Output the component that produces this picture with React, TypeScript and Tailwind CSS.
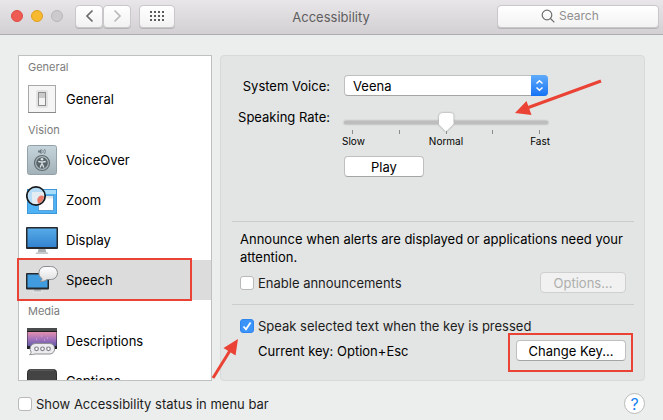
import { useState, type ReactNode } from "react";

function SwitchIcon() {
  return (
    <svg width="32" height="32" viewBox="0 0 32 32" aria-hidden="true">
      <rect x="2.500" y="2.500" width="27" height="27" fill="#f5f5f5" stroke="#a9a9a9" />
      <path d="M2 29.500h28" stroke="#8a8a8a" />
      <rect x="10" y="7" width="12" height="18" rx="2" fill="#e3e3e3" />
      <rect x="12.500" y="9.500" width="7" height="13" fill="#f4f4f4" stroke="#8b8b8b" />
      <rect x="13" y="10" width="6" height="5" fill="#c9c9c9" />
    </svg>
  );
}

function VoiceOverIcon() {
  return (
    <svg width="32" height="32" viewBox="0 0 32 32" aria-hidden="true">
      <defs>
        <linearGradient id="vo" x1="0" y1="0" x2="0" y2="1">
          <stop offset="0" stopColor="#c6d5dc" />
          <stop offset="1" stopColor="#a3b2b9" />
        </linearGradient>
      </defs>
      <rect x="1.500" y="1.500" width="29" height="29" rx="2" fill="url(#vo)" stroke="#93a1a8" />
      <path d="M12 6.500h1.500l2-1.800v5.600l-2-1.800h-1.500z" fill="#6d7980" />
      <path d="M16.800 6q1 1.500 0 3M18.500 5q1.800 2.500 0 5" fill="none" stroke="#6d7980" strokeWidth=".9" />
      <circle cx="16" cy="19" r="7.500" fill="#a9b7bd" stroke="#626c70" strokeWidth="1.200" />
      <circle cx="16" cy="19" r="5.800" fill="#59646a" />
      <circle cx="16" cy="15.300" r="1.300" fill="#dde6ea" />
      <path
        d="M12.300 17.500l3.700.7 3.700-.7M16 18v2.500M15.500 20.300l-1.300 3.200M16.500 20.300l1.300 3.200"
        fill="none"
        stroke="#dde6ea"
        strokeWidth="1.300"
      />
    </svg>
  );
}

function ZoomIcon() {
  return (
    <svg width="32" height="32" viewBox="0 0 32 32" aria-hidden="true">
      <rect x="1.500" y="5.500" width="29" height="24" fill="#4fb2f5" stroke="#3d97d8" />
      <rect x="2" y="6" width="28" height="4" fill="#a9dcf8" />
      <rect x="12.500" y="11.500" width="15" height="15" fill="#fff" stroke="#3b8cc6" strokeWidth=".7" />
      <path d="M13 12h14v2.500h-14z" fill="#dfe6ea" />
      <circle cx="10" cy="12" r="9.200" fill="#b7dcf6" />
      <path d="M6 8h12v8a9 9 0 0 1-4 4H6z" fill="#e3ebf3" />
      <path d="M17.500 12a4.500 4.500 0 0 0-6 5.500l1 2.500q4.500-2 5.500-7z" fill="#ea7a69" />
      <circle cx="10" cy="12" r="9.200" fill="none" stroke="#17191b" strokeWidth="1.700" />
    </svg>
  );
}

function DisplayIcon() {
  return (
    <svg width="32" height="32" viewBox="0 0 32 32" aria-hidden="true">
      <defs>
        <linearGradient id="scr" x1="0" y1="0" x2="0" y2="1">
          <stop offset="0" stopColor="#57abe8" />
          <stop offset="1" stopColor="#3383cf" />
        </linearGradient>
      </defs>
      <path d="M12.500 25h7l.8 3.500h-8.600z" fill="#a8adb0" />
      <path d="M10.500 28.300h11l1 1.700h-13z" fill="#c4c8ca" />
      <rect x="0" y="3" width="32" height="22" rx="1" fill="#25292d" />
      <rect x="1.500" y="4.500" width="29" height="18.500" fill="url(#scr)" />
    </svg>
  );
}

function SpeechIcon() {
  return (
    <svg width="32" height="32" viewBox="0 0 32 32" aria-hidden="true">
      <defs>
        <linearGradient id="bub" x1="0" y1="0" x2="0" y2="1">
          <stop offset="0" stopColor="#ffffff" />
          <stop offset="1" stopColor="#dedede" />
        </linearGradient>
      </defs>
      <path d="M8.500 25h6l.7 3h-7.400z" fill="#b4b8ba" />
      <path d="M7 27.500h9l.8 1.300h-10.600z" fill="#e6e7e8" />
      <rect x="0" y="9" width="23" height="16.500" rx="1" fill="#25292d" />
      <rect x="1.500" y="10.500" width="20" height="13" fill="#409bdf" />
      <path
        d="M19 2.500h5.500a6.500 6.500 0 0 1 1 13h-4.500c-2 1.700-4.500 2-7 1.700 1.500-.6 2-1.500 2-2.700A6.500 6.500 0 0 1 19 2.500z"
        fill="url(#bub)"
        stroke="#898d90"
      />
    </svg>
  );
}

function DescriptionsIcon() {
  return (
    <svg width="32" height="32" viewBox="0 0 32 32" aria-hidden="true">
      <defs>
        <linearGradient id="desc" x1="0" y1="0" x2="0" y2="1">
          <stop offset="0" stopColor="#e48fae" />
          <stop offset=".5" stopColor="#a573bb" />
          <stop offset="1" stopColor="#655baa" />
        </linearGradient>
      </defs>
      <rect x="1" y="3" width="30" height="21" fill="#1f1f22" />
      <rect x="1" y="3" width="30" height="3" fill="#4a4b4d" />
      <rect x="1.500" y="7" width="29" height="14" fill="url(#desc)" />
      <path d="M15 11h1M21 13h1M18 15h1M10 14h1" stroke="#d9b4e0" />
      <path
        d="M9 18.500h15a5.300 5.300 0 0 1 0 10.500H9q-2 .8-5.500.6 1.500-1 1.700-2.500A5.300 5.300 0 0 1 9 18.500z"
        fill="#ececee"
        stroke="#8f8f94"
      />
      <g fill="#fff" stroke="#818187" strokeWidth="1.200">
        <circle cx="10.500" cy="23.800" r="1.800" />
        <circle cx="16.500" cy="23.800" r="1.800" />
        <circle cx="22.500" cy="23.800" r="1.800" />
      </g>
    </svg>
  );
}

function CaptionsIcon() {
  return (
    <svg width="32" height="32" viewBox="0 0 32 32" aria-hidden="true">
      <rect x="1.500" y="4.500" width="29" height="26" rx="3" fill="#444445" stroke="#2e2e2f" />
      <path d="M4 5h24" stroke="#6b6b6c" />
    </svg>
  );
}

const groups: { title: string; items: { name: string; icon: ReactNode }[] }[] = [
  { title: "General", items: [{ name: "General", icon: <SwitchIcon /> }] },
  {
    title: "Vision",
    items: [
      { name: "VoiceOver", icon: <VoiceOverIcon /> },
      { name: "Zoom", icon: <ZoomIcon /> },
      { name: "Display", icon: <DisplayIcon /> },
      { name: "Speech", icon: <SpeechIcon /> },
    ],
  },
  {
    title: "Media",
    items: [
      { name: "Descriptions", icon: <DescriptionsIcon /> },
      { name: "Captions", icon: <CaptionsIcon /> },
    ],
  },
];

function TitleBar() {
  const tool =
    "flex h-[23px] items-center justify-center rounded border border-[#c9c7c9] bg-gradient-to-b from-white to-[#f3f2f3] shadow-[0_1px_0_#b5b3b5]";
  return (
    <header className="grid h-[35px] grid-cols-[1fr_auto_1fr] items-center border-b border-[#aeacae] bg-gradient-to-b from-[#e8e6e8] to-[#d2d0d2] pr-1 pb-0.5 pl-[11px]">
      <div className="flex items-center">
        <div className="flex gap-2">
          <button aria-label="Close" className="size-3 rounded-full border border-[#dd4a42] bg-[#ee5b52]" />
          <button aria-label="Minimize" className="size-3 rounded-full border border-[#dfa023] bg-[#f6b92f]" />
          <button aria-label="Full screen" disabled className="size-3 rounded-full border border-[#b9b7b9] bg-[#cccacc]" />
        </div>
        <nav className="ml-3 flex">
          <button aria-label="Back" className={`${tool} w-7`}>
            <svg width="9" height="14" viewBox="0 0 9 14" fill="none" stroke="#6a6a6a" strokeWidth="1.700">
              <path d="M7.500 1.500L2 7l5.500 5.500" />
            </svg>
          </button>
          <button aria-label="Forward" className={`${tool} w-7`}>
            <svg width="9" height="14" viewBox="0 0 9 14" fill="none" stroke="#b9b9b9" strokeWidth="1.700">
              <path d="M1.500 1.500L7 7l-5.500 5.500" />
            </svg>
          </button>
        </nav>
        <button aria-label="Show all" className={`${tool} ml-2 w-9`}>
          <svg width="14" height="10" viewBox="0 0 14 10" fill="#5c5c5c">
            {[0, 4, 8].map((y) => [0, 4, 8, 12].map((x) => <rect key={`${x}-${y}`} x={x} y={y} width="2" height="2" />))}
          </svg>
        </button>
      </div>
      <h1 className="pt-0.5 pr-2 text-[#5f5e5f]">Accessibility</h1>
      <label className={`${tool} w-[162px] justify-self-end`}>
        <svg width="14" height="14" viewBox="0 0 14 14" fill="none" stroke="#6e6e6e" strokeWidth="1.200">
          <circle cx="6" cy="6" r="4.800" />
          <path d="M9.500 9.500l3.800 3.800" />
        </svg>
        <input
          type="search"
          aria-label="Search"
          placeholder="Search"
          className="ml-1 w-14 appearance-none bg-transparent text-[12px] outline-none placeholder:text-[#8f8f8f] placeholder:opacity-100"
        />
      </label>
    </header>
  );
}

function Check({ label, checked, onChange }: { label: string; checked: boolean; onChange: (v: boolean) => void }) {
  return (
    <label className="flex items-center gap-1 text-[#1c1c1c]">
      <span className="relative size-3.5">
        <input
          type="checkbox"
          checked={checked}
          onChange={(e) => onChange(e.target.checked)}
          className="block size-3.5 appearance-none rounded-[3px] border border-[#b9b9b9] bg-white checked:border-[#2f86ee] checked:bg-[#3b94fa]"
        />
        {checked && (
          <svg className="pointer-events-none absolute inset-0" width="14" height="14" viewBox="0 0 14 14" fill="none" stroke="#fff" strokeWidth="1.800">
            <path d="M3.500 7.500L6 10.300L10.600 3.500" />
          </svg>
        )}
      </span>
      {label}
    </label>
  );
}

function PushButton({ children, className, disabled }: { children: ReactNode; className: string; disabled?: boolean }) {
  return (
    <button
      disabled={disabled}
      className={`h-[21px] rounded border border-[#bfbfbf] border-b-[#a5a5a5] bg-white leading-[18px] text-black disabled:border-[#cfcfcf] disabled:bg-[#f0f1f0] disabled:text-[#aeafae] ${className}`}
    >
      {children}
    </button>
  );
}

function Sidebar({ active, onSelect }: { active: string; onSelect: (n: string) => void }) {
  return (
    <aside className="h-[326px] w-[194px] shrink-0 overflow-hidden border border-[#bfc1c0] bg-white">
      {groups.map((g) => (
        <section key={g.title} className="group">
          <h2 className="flex h-[21px] items-center pl-[9px] text-[11px] text-[#7c7c7c] group-first:mb-0.5">{g.title}</h2>
          <ul>
            {g.items.map((it) => (
              <li key={it.name}>
                <button
                  onClick={() => onSelect(it.name)}
                  className={`flex h-10 w-full items-center gap-2 pl-[7px] text-left ${it.name === active ? "bg-[#dcdcdc]" : ""}`}
                >
                  {it.icon}
                  {it.name}
                </button>
              </li>
            ))}
          </ul>
        </section>
      ))}
    </aside>
  );
}

export default function App() {
  const [active, setActive] = useState("Speech");
  const [rate, setRate] = useState(50);
  const [announce, setAnnounce] = useState(false);
  const [speak, setSpeak] = useState(true);
  const [status, setStatus] = useState(false);

  return (
    <div className="relative min-h-screen bg-[#eceeed] font-['Inter','Liberation_Sans',sans-serif] text-[13px] leading-[18px] text-black">
      <TitleBar />
      <main className="flex gap-2 px-[18px] pt-5">
        <Sidebar active={active} onSelect={setActive} />
        <div className="min-w-0 flex-1 rounded border border-[#d8dad9] bg-[#e3e5e4] pr-2.5 pl-[11px]">
          <section className="grid grid-cols-[98px_204px] gap-x-[14px] pt-[19px] pb-11">
            <label htmlFor="voice" className="self-center text-right">
              System Voice:
            </label>
            <div className="relative">
              <select
                id="voice"
                className="block h-[21px] w-full appearance-none rounded border border-[#bfbfbf] border-b-[#a5a5a5] bg-white pl-2 leading-[18px]"
              >
                <option>Veena</option>
              </select>
              <span className="pointer-events-none absolute inset-y-0 right-0 flex w-[17px] items-center justify-center rounded-r bg-gradient-to-b from-[#5fabfa] to-[#1272f4]">
                <svg width="9" height="13" viewBox="0 0 9 13" fill="none" stroke="#fff" strokeWidth="1.500">
                  <path d="M1.500 4.500L4.500 1.700l3 2.800M1.500 8.500l3 2.800 3-2.800" />
                </svg>
              </span>
            </div>
            <label htmlFor="rate" className="mt-3 self-start text-right">
              Speaking Rate:
            </label>
            <div className="mt-4">
              <input
                id="rate"
                type="range"
                value={rate}
                onChange={(e) => setRate(Number(e.target.value))}
                className="block h-5 w-full appearance-none bg-transparent drop-shadow-[0_0_1px_rgba(0,0,0,0.35)] [&::-webkit-slider-runnable-track]:h-[3px] [&::-webkit-slider-runnable-track]:rounded-full [&::-webkit-slider-runnable-track]:bg-[#bcbdbc] [&::-webkit-slider-thumb]:-mt-2 [&::-webkit-slider-thumb]:h-[19px] [&::-webkit-slider-thumb]:w-[15px] [&::-webkit-slider-thumb]:appearance-none [&::-webkit-slider-thumb]:rounded-t [&::-webkit-slider-thumb]:bg-white [&::-webkit-slider-thumb]:[clip-path:polygon(0_0,100%_0,100%_60%,50%_100%,0_60%)]"
              />
              <div className="-mt-0.5 flex justify-between px-2">
                {[0, 1, 2, 3, 4].map((t) => (
                  <span key={t} className="h-1 w-px bg-[#8b8c8b]" />
                ))}
              </div>
              <div className="-ml-0.5 -mr-0.5 grid grid-cols-3 text-[10px] leading-[14px]">
                <span>Slow</span>
                <span className="text-center">Normal</span>
                <span className="text-right">Fast</span>
              </div>
            </div>
            <PushButton className="col-start-2 mt-2 w-20">Play</PushButton>
          </section>

          <section className="border-t border-[#cbcdcc] px-2 pt-2 pb-[11px]">
            <p>Announce when alerts are displayed or applications need your attention.</p>
            <div className="mt-1.5 flex items-center justify-between">
              <Check label="Enable announcements" checked={announce} onChange={setAnnounce} />
              <PushButton disabled className="w-[86px]">
                Options...
              </PushButton>
            </div>
          </section>

          <section className="border-t border-[#cbcdcc] px-2 pt-3">
            <Check label="Speak selected text when the key is pressed" checked={speak} onChange={setSpeak} />
            <div className="mt-[5px] flex items-center justify-between pl-[18px]">
              <span>Current key: Option+Esc</span>
              <PushButton className="w-[110px]">Change Key...</PushButton>
            </div>
          </section>
        </div>
      </main>
      <footer className="flex items-center justify-between px-[18px] pt-3">
        <Check label="Show Accessibility status in menu bar" checked={status} onChange={setStatus} />
        <button aria-label="Help" className="size-[21px] rounded-full border border-[#b9bbba] bg-white text-base leading-[18px] text-[#1b83f5]">
          ?
        </button>
      </footer>

      <svg className="pointer-events-none absolute top-0 left-0" width="663" height="420" viewBox="0 0 663 420" fill="none" aria-hidden="true">
        <g stroke="#ea4335" strokeWidth="2">
          <rect x="18" y="259" width="173" height="41" />
          <rect x="509" y="334" width="123" height="37" />
        </g>
        <g stroke="#ea4335" strokeWidth="3">
          <path d="M601 81L527 108" />
          <path d="M213 378L231 349" />
        </g>
        <path d="M515 113L526.500 101L531.500 115zM238 339L223.500 348L235.500 355.500z" fill="#ea4335" />
      </svg>
    </div>
  );
}
